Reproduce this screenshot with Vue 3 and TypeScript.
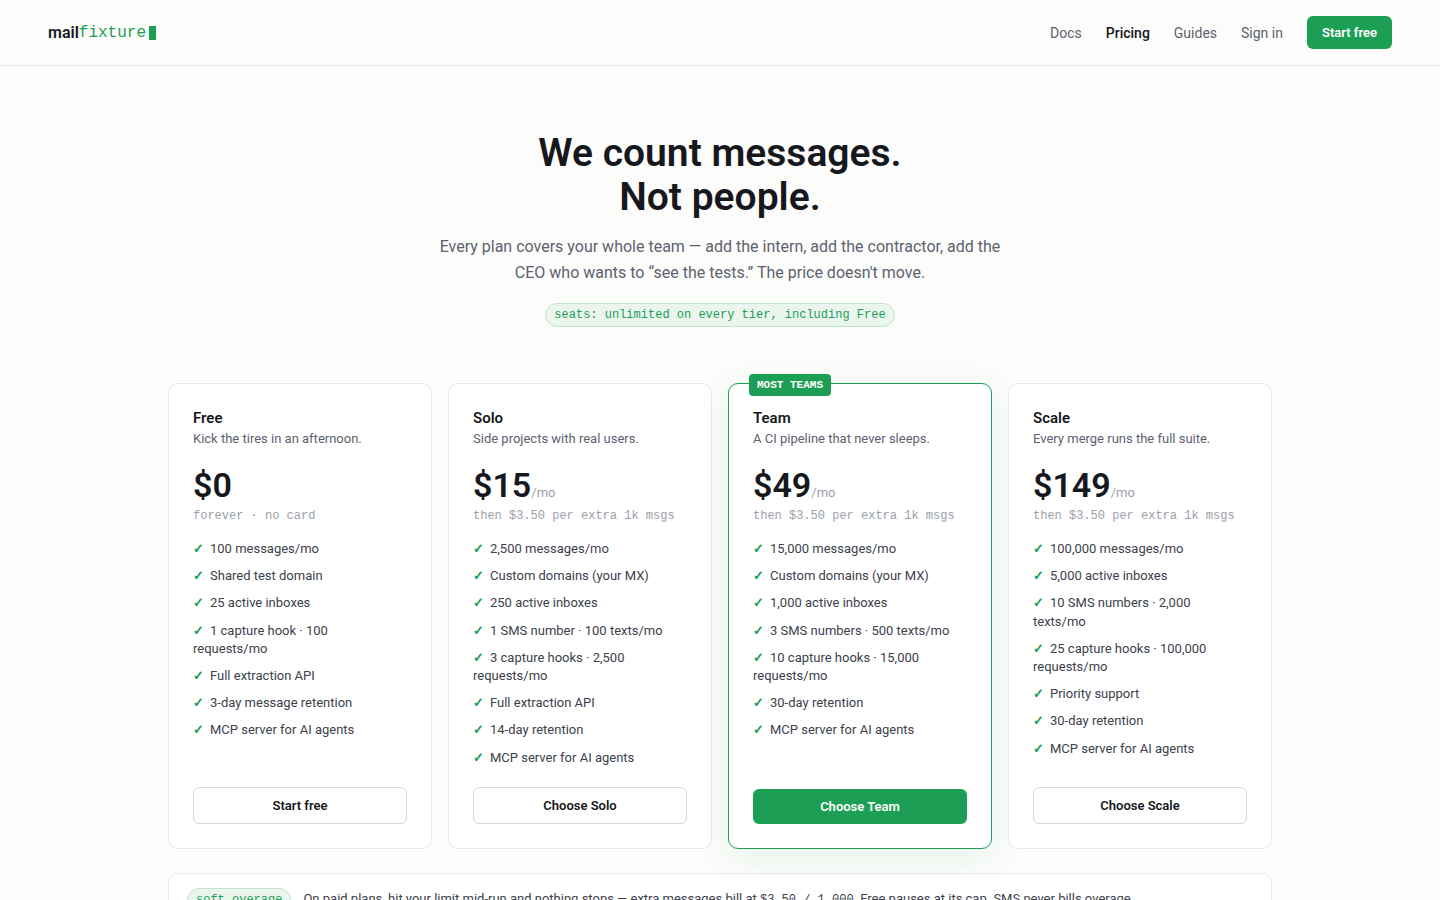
<script setup lang="ts">
interface NavLink {
  label: string
  current?: boolean
}

interface Plan {
  name: string
  blurb: string
  price: string
  period?: string
  note: string
  features: string[]
  cta: string
  featured?: boolean
}

const links: NavLink[] = [
  { label: 'Docs' },
  { label: 'Pricing', current: true },
  { label: 'Guides' },
  { label: 'Sign in' },
]

const overageNote = 'then $3.50 per extra 1k msgs'

const plans: Plan[] = [
  {
    name: 'Free',
    blurb: 'Kick the tires in an afternoon.',
    price: '$0',
    note: 'forever · no card',
    features: [
      '100 messages/mo',
      'Shared test domain',
      '25 active inboxes',
      '1 capture hook · 100 requests/mo',
      'Full extraction API',
      '3-day message retention',
      'MCP server for AI agents',
    ],
    cta: 'Start free',
  },
  {
    name: 'Solo',
    blurb: 'Side projects with real users.',
    price: '$15',
    period: '/mo',
    note: overageNote,
    features: [
      '2,500 messages/mo',
      'Custom domains (your MX)',
      '250 active inboxes',
      '1 SMS number · 100 texts/mo',
      '3 capture hooks · 2,500 requests/mo',
      'Full extraction API',
      '14-day retention',
      'MCP server for AI agents',
    ],
    cta: 'Choose Solo',
  },
  {
    name: 'Team',
    blurb: 'A CI pipeline that never sleeps.',
    price: '$49',
    period: '/mo',
    note: overageNote,
    features: [
      '15,000 messages/mo',
      'Custom domains (your MX)',
      '1,000 active inboxes',
      '3 SMS numbers · 500 texts/mo',
      '10 capture hooks · 15,000 requests/mo',
      '30-day retention',
      'MCP server for AI agents',
    ],
    cta: 'Choose Team',
    featured: true,
  },
  {
    name: 'Scale',
    blurb: 'Every merge runs the full suite.',
    price: '$149',
    period: '/mo',
    note: overageNote,
    features: [
      '100,000 messages/mo',
      '5,000 active inboxes',
      '10 SMS numbers · 2,000 texts/mo',
      '25 capture hooks · 100,000 requests/mo',
      'Priority support',
      '30-day retention',
      'MCP server for AI agents',
    ],
    cta: 'Choose Scale',
  },
]
</script>

<template>
  <div class="page">
    <header class="topbar">
      <a class="logo" href="#">mail<span class="logo-mono">fixture</span><span class="cursor" aria-hidden="true"></span></a>
      <nav class="nav" aria-label="Main">
        <a
          v-for="link in links"
          :key="link.label"
          href="#"
          class="nav-link"
          :class="{ current: link.current }"
          :aria-current="link.current ? 'page' : undefined"
        >{{ link.label }}</a>
        <button type="button" class="btn btn-nav">Start free</button>
      </nav>
    </header>

    <main class="main">
      <section class="hero">
        <h1>We count messages.<br />Not people.</h1>
        <p class="lead">
          Every plan covers your whole team — add the intern, add the contractor, add the CEO who
          wants to “see the tests.” The price doesn't move.
        </p>
        <span class="chip">seats: unlimited on every tier, including Free</span>
      </section>

      <section class="plans" aria-label="Plans">
        <article v-for="plan in plans" :key="plan.name" class="plan" :class="{ featured: plan.featured }">
          <span v-if="plan.featured" class="badge">MOST TEAMS</span>
          <h2>{{ plan.name }}</h2>
          <p class="blurb">{{ plan.blurb }}</p>
          <p class="price">{{ plan.price }}<span v-if="plan.period" class="period">{{ plan.period }}</span></p>
          <p class="note">{{ plan.note }}</p>
          <ul class="features">
            <li v-for="feature in plan.features" :key="feature"><span class="check" aria-hidden="true">✓</span>{{ feature }}</li>
          </ul>
          <button type="button" class="btn btn-plan" :class="{ 'btn-outline': !plan.featured }">{{ plan.cta }}</button>
        </article>
      </section>

      <section class="overage">
        <span class="chip">soft overage</span>
        <p>
          On paid plans, hit your limit mid-run and nothing stops — extra messages bill at
          <code>$3.50 / 1,000</code>. Free pauses at its cap. SMS never bills overage.
        </p>
      </section>
    </main>
  </div>
</template>

<style>
html {
  background: #fcfcfa;
}

body {
  margin: 0;
}
</style>

<style scoped>
.page {
  --green: #1d9e55;
  --ink: #16181d;
  --body: #3c414c;
  --muted: #5c6270;
  --faint: #9a9fab;
  --line: #e8e8e6;
  --mono: "Liberation Mono", "DejaVu Sans Mono", monospace;
  background: #fcfcfa;
  color: var(--ink);
  font-family: Roboto, "Liberation Sans", sans-serif;
}

h1,
h2,
p,
ul {
  margin: 0;
  padding: 0;
}

.topbar {
  display: flex;
  align-items: center;
  justify-content: space-between;
  padding: 16px 48px;
  border-bottom: 1px solid var(--line);
}

.logo {
  display: flex;
  align-items: center;
  color: var(--ink);
  font-size: 16px;
  font-weight: 600;
  line-height: 20px;
  text-decoration: none;
}

.logo-mono {
  color: var(--green);
  font-family: var(--mono);
  font-weight: 400;
}

.cursor {
  width: 7px;
  height: 14px;
  margin-left: 3px;
  background: var(--green);
}

.nav {
  display: flex;
  align-items: center;
  gap: 24px;
}

.nav-link {
  color: var(--muted);
  font-size: 14px;
  line-height: 20px;
  text-decoration: none;
}

.nav-link.current {
  color: var(--ink);
  font-weight: 500;
}

.btn {
  border: 0;
  border-radius: 6px;
  background: var(--green);
  color: #fff;
  font-family: inherit;
  font-size: 13px;
  font-weight: 600;
  line-height: 17px;
  cursor: pointer;
}

.btn-nav {
  padding: 8px 15px;
}

.main {
  max-width: 1104px;
  margin: 0 auto;
  padding: 65px 24px;
}

.hero {
  display: flex;
  flex-direction: column;
  align-items: center;
  text-align: center;
}

h1 {
  font-size: 39px;
  font-weight: 600;
  line-height: 44px;
}

.lead {
  max-width: 580px;
  margin: 15px 0 17px;
  color: var(--muted);
  font-size: 16px;
  line-height: 26px;
}

.chip {
  flex: none;
  padding: 3px 8px;
  border: 1px solid #c2e3d0;
  border-radius: 12px;
  background: #eaf5ee;
  color: var(--green);
  font-family: var(--mono);
  font-size: 12px;
  line-height: 16px;
}

.plans {
  display: grid;
  grid-template-columns: repeat(4, minmax(0, 1fr));
  gap: 16px;
  margin-top: 56px;
}

.plan {
  position: relative;
  display: flex;
  flex-direction: column;
  padding: 24px;
  border: 1px solid var(--line);
  border-radius: 10px;
  background: #fff;
}

.plan.featured {
  border-color: var(--green);
  box-shadow: 0 8px 32px rgba(29, 158, 85, 0.1);
}

.badge {
  position: absolute;
  top: -10px;
  left: 20px;
  padding: 3px 8px;
  border-radius: 4px;
  background: var(--green);
  color: #fff;
  font-family: var(--mono);
  font-size: 11px;
  font-weight: 700;
  line-height: 16px;
}

h2 {
  font-size: 15px;
  font-weight: 600;
  line-height: 20px;
}

.blurb {
  color: var(--muted);
  font-size: 13px;
  line-height: 21px;
}

.price {
  margin-top: 15px;
  font-size: 34px;
  font-weight: 600;
  line-height: 42px;
}

.period {
  color: var(--faint);
  font-size: 13px;
  font-weight: 400;
  line-height: 1;
}

.note {
  color: var(--faint);
  font-family: var(--mono);
  font-size: 12px;
  line-height: 20px;
}

.features {
  display: flex;
  flex: 1;
  flex-direction: column;
  gap: 9px;
  margin: 14px 0 20px;
  padding-right: 8px;
  color: var(--body);
  font-size: 13px;
  line-height: 1.4;
  list-style: none;
}

.check {
  margin-right: 6px;
  color: var(--green);
  font-weight: 700;
}

.btn-plan {
  padding: 9px 16px;
}

.btn-outline {
  border: 1px solid #d8d9dc;
  background: #fff;
  color: var(--ink);
}

.overage {
  display: flex;
  align-items: center;
  gap: 12px;
  margin-top: 24px;
  padding: 14px 18px;
  border: 1px solid var(--line);
  border-radius: 10px;
  background: #fff;
}

.overage p {
  color: var(--body);
  font-size: 13px;
  line-height: 20px;
}

code {
  font-family: var(--mono);
  font-size: 12px;
}
</style>
